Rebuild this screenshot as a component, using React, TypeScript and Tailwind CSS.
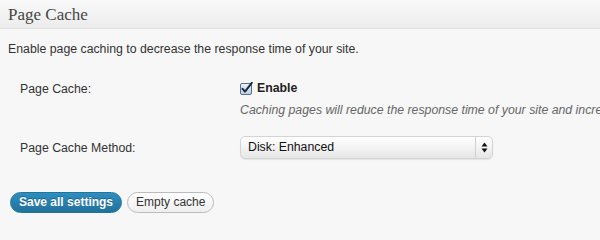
import React from "react";

function CheckIcon() {
  return (
    <svg width="13" height="13" viewBox="0 0 13 13" className="block">
      <defs>
        <linearGradient id="cb" x1="0" y1="0" x2="0" y2="1">
          <stop offset="0" stopColor="#eef4fb" />
          <stop offset="1" stopColor="#b9cfe8" />
        </linearGradient>
      </defs>
      <rect x="0.5" y="1.5" width="11" height="11" rx="1.5" fill="url(#cb)" stroke="#5a6f8c" />
      <path d="M2.6 6.8 L5 9.6 L11.8 0.8" fill="none" stroke="#1d2a3a" strokeWidth="2" strokeLinecap="round" strokeLinejoin="round" />
    </svg>
  );
}

function Arrows() {
  return (
    <svg width="7" height="11" viewBox="0 0 7 11" className="block">
      <path d="M3.5 0.5 L6.5 4.5 L0.5 4.5 Z" fill="#111" />
      <path d="M3.5 10.5 L6.5 6.5 L0.5 6.5 Z" fill="#111" />
    </svg>
  );
}

export default function App() {
  const sans = { fontFamily: '"Liberation Sans", Arial, sans-serif' };
  return (
    <div className="w-[600px] h-[240px] overflow-hidden bg-[#f7f7f7] text-[#333]" style={sans}>
      <div className="h-[29px] border-b border-[#dfdfdf] bg-gradient-to-b from-[#f9f9f9] to-[#ececec] pl-[8px] pt-[4px]">
        <h3 className="text-[17px] leading-[22px] text-[#464646]" style={{ fontFamily: '"Liberation Serif", "Times New Roman", serif' }}>
          Page Cache
        </h3>
      </div>
      <p className="pl-[8px] pt-[12px] text-[12.3px] leading-[16px]">
        Enable page caching to decrease the response time of your site.
      </p>
      <div className="pt-[21px] pl-[20px] flex">
        <div className="w-[220px] shrink-0 text-[12.3px] leading-[16px] pt-[3px]">Page Cache:</div>
        <div className="flex flex-col whitespace-nowrap overflow-hidden min-w-0">
          <div className="flex items-center gap-[4px] h-[20px]">
            <CheckIcon />
            <span className="text-[12.3px] font-bold text-[#222]">Enable</span>
          </div>
          <div className="text-[12.3px] italic text-[#666] leading-[16px] pt-[4px]">
            Caching pages will reduce the response time of your site and incre
          </div>
        </div>
      </div>
      <div className="pt-[18px] pl-[20px] flex items-center">
        <div className="w-[220px] shrink-0 text-[12.3px] leading-[16px]">Page Cache Method:</div>
        <div className="w-[253px] h-[23px] rounded-[5px] border border-[#d4d4d4] bg-gradient-to-b from-[#ffffff] via-[#f3f3f3] to-[#e6e6e6] flex items-center shadow-[0_1px_1px_rgba(0,0,0,0.08)]">
          <span className="flex-1 pl-[7px] text-[12.3px] text-[#111]">Disk: Enhanced</span>
          <div className="w-[17px] h-full border-l border-[#d0d0d0] flex items-center justify-center">
            <Arrows />
          </div>
        </div>
      </div>
      <div className="pt-[33px] pl-[10px] flex gap-[5px]">
        <button className="h-[21px] px-[8px] rounded-full border border-[#21759b] bg-gradient-to-b from-[#2e8ec0] to-[#21729b] text-white text-[12px] font-bold leading-[19px] [text-shadow:0_-1px_0_rgba(0,0,0,0.3)]" style={sans}>
          Save all settings
        </button>
        <button className="h-[21px] px-[8px] rounded-full border border-[#bbb] bg-gradient-to-b from-[#ffffff] to-[#efefef] text-[#333] text-[12px] leading-[19px]" style={sans}>
          Empty cache
        </button>
      </div>
    </div>
  );
}
